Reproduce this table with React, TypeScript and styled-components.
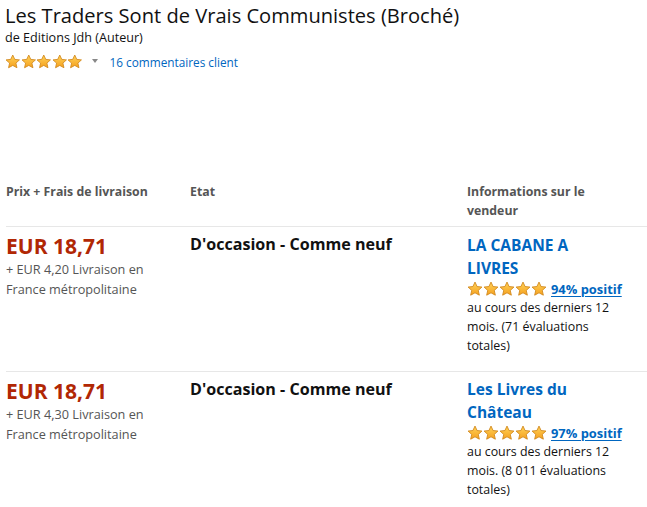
import styled, { createGlobalStyle } from "styled-components";

const GlobalStyle = createGlobalStyle`
  body {
    margin: 0;
    background: #ffffff;
    font-family: "Open Sans", "Noto Sans", Arial, sans-serif;
    color: #111111;
  }
`;

const Page = styled.div`
  width: 647px;
  padding: 3px 0 0 5px;
  box-sizing: border-box;
`;

const Title = styled.h1`
  margin: 0;
  font-size: 20.1px;
  font-weight: 400;
  line-height: 26px;
  color: #111;
`;

const Byline = styled.div`
  font-size: 12.6px;
  line-height: 18px;
`;

const RatingRow = styled.div`
  display: flex;
  align-items: center;
  margin-top: 5px;
  height: 20px;
`;

const Caret = styled.span`
  width: 0;
  height: 0;
  border-left: 3.5px solid transparent;
  border-right: 3.5px solid transparent;
  border-top: 4px solid #888;
  margin: 0 12px 3px 9px;
`;

const Link = styled.a<{ $bold?: boolean; $underline?: boolean }>`
  color: #0066c0;
  font-size: ${(p) => (p.$bold ? "12.9px" : "11.8px")};
  font-weight: ${(p) => (p.$bold ? 700 : 400)};
  text-decoration: ${(p) => (p.$underline ? "underline" : "none")};
  text-decoration-thickness: 1px;
  text-underline-offset: 2px;
  cursor: pointer;
`;

const Table = styled.div`
  margin-top: 107px;
  display: grid;
  grid-template-columns: 184px 277px 1fr;
  padding-left: 1px;
`;

const HeadCell = styled.div`
  font-size: 12.3px;
  font-weight: 700;
  color: #555;
  line-height: 19px;
  padding: 3px 25px 6px 0;
  border-bottom: 1px solid #e7e7e7;
`;

const Cell = styled.div<{ $last?: boolean }>`
  padding: 6px 25px 16px 0;
  border-bottom: ${(p) => (p.$last ? "none" : "1px solid #e7e7e7")};
`;

const Price = styled.div`
  color: #b12704;
  font-size: 21px;
  font-weight: 700;
  line-height: 26px;
`;

const Shipping = styled.div`
  font-size: 12.7px;
  color: #555;
  line-height: 20px;
`;

const Condition = styled.div`
  font-size: 16.1px;
  font-weight: 700;
  line-height: 22px;
`;

const SellerName = styled.a`
  display: block;
  color: #0066c0;
  font-size: 15.5px;
  font-weight: 700;
  line-height: 23px;
  margin-top: 0.5px;
`;

const SellerRating = styled.div`
  display: flex;
  align-items: center;
  gap: 4px;
  height: 18px;
`;

const SellerText = styled.div`
  font-size: 12.4px;
  line-height: 19px;
`;

const StarRow = styled.span`
  display: inline-flex;
`;

const Star = ({ size }: { size: number }) => (
  <svg width={size} height={size} viewBox="0 0 24 24">
    <defs>
      <linearGradient id="sg" x1="0" y1="0" x2="0" y2="1">
        <stop offset="0" stopColor="#ffd35a" />
        <stop offset="1" stopColor="#f5a01e" />
      </linearGradient>
    </defs>
    <path
      d="M12 1.6l3.1 6.7 7.3.8-5.5 5 1.6 7.2L12 17.7l-6.5 3.6 1.6-7.2-5.5-5 7.3-.8z"
      fill="url(#sg)"
      stroke="#d0871c"
      strokeWidth="1.3"
      strokeLinejoin="round"
    />
  </svg>
);

const Stars = ({ size }: { size: number }) => (
  <StarRow>
    {[0, 1, 2, 3, 4].map((i) => (
      <Star key={i} size={size} />
    ))}
  </StarRow>
);

const offers = [
  {
    price: "EUR 18,71",
    shipping: "+ EUR 4,20 Livraison en France métropolitaine",
    seller: "LA CABANE A LIVRES",
    positive: "94% positif",
    ratings: "71",
  },
  {
    price: "EUR 18,71",
    shipping: "+ EUR 4,30 Livraison en France métropolitaine",
    seller: "Les Livres du Château",
    positive: "97% positif",
    ratings: "8 011",
  },
];

export default function App() {
  return (
    <>
      <GlobalStyle />
      <Page>
        <Title>Les Traders Sont de Vrais Communistes (Broché)</Title>
        <Byline>de Editions Jdh (Auteur)</Byline>
        <RatingRow>
          <Stars size={15.5} />
          <Caret />
          <Link>16 commentaires client</Link>
        </RatingRow>

        <Table>
          <HeadCell>Prix + Frais de livraison</HeadCell>
          <HeadCell>Etat</HeadCell>
          <HeadCell>Informations sur le vendeur</HeadCell>
          {offers.map((o, i) => {
            const last = i === offers.length - 1;
            return [
              <Cell key={`p${i}`} $last={last}>
                <Price>{o.price}</Price>
                <Shipping>{o.shipping}</Shipping>
              </Cell>,
              <Cell key={`c${i}`} $last={last}>
                <Condition>D'occasion - Comme neuf</Condition>
              </Cell>,
              <Cell key={`s${i}`} $last={last}>
                <SellerName>{o.seller}</SellerName>
                <SellerRating>
                  <Stars size={16} />
                  <Link $bold $underline>
                    {o.positive}
                  </Link>
                </SellerRating>
                <SellerText>
                  au cours des derniers 12 mois. ({o.ratings} évaluations totales)
                </SellerText>
              </Cell>,
            ];
          })}
        </Table>
      </Page>
    </>
  );
}
